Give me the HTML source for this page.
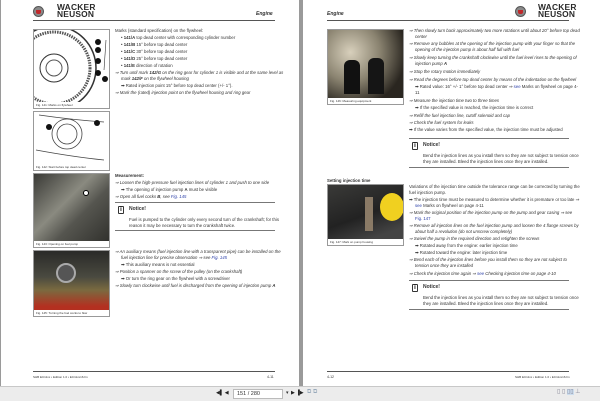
<!DOCTYPE html>
<html><head><meta charset="utf-8"><style>
*{margin:0;padding:0;box-sizing:border-box}
body{width:600px;height:401px;background:#9a9a9a;position:relative;overflow:hidden;font-family:"Liberation Sans",sans-serif}
.pg{position:absolute;top:0;height:386px;background:#fff}
.t{position:absolute;font-size:4.3px;color:#333;white-space:nowrap;line-height:5px}
.i{font-style:italic}
.b{font-weight:bold}
.ln{position:absolute;height:1px;background:#777}
.fig{position:absolute;border:1px solid #999;background:#fff;overflow:hidden}
.cap{position:absolute;bottom:1px;left:2px;font-size:3px;color:#333}
.blue{color:#2a3ea8}
.logo{position:absolute;font-weight:900;font-size:8px;line-height:6.5px;color:#2a2a2a;letter-spacing:.2px;transform:scaleX(1.05);transform-origin:left}
.circ{position:absolute;width:11px;height:11px;border-radius:50%;background:#8a8a8a;border:1px solid #555}
.circ::after{content:"";position:absolute;left:2px;top:2.5px;width:5px;height:4px;background:#c0282a;border-radius:0 0 2px 2px}
.note{position:absolute;width:6px;height:8px;border:1px solid #333;border-radius:1px;font-size:6px;font-weight:bold;text-align:center;line-height:7px}
.dot{position:absolute;width:6px;height:6px;border-radius:50%;background:#111}
</style></head><body>
<div class="pg" style="left:1px;width:298px">
 <div class="circ" style="left:32px;top:6px"></div>
 <div class="logo" style="left:56px;top:5px">WACKER<br>NEUSON</div>
 <div class="t i b" style="left:255px;top:12px;font-size:5px">Engine</div>
 <div class="ln" style="left:32px;top:20px;width:242px;background:#555"></div>

 <div class="fig" style="left:32px;top:29px;width:77px;height:80px">
  <svg width="75" height="72" style="position:absolute;left:0;top:0"><circle cx="20" cy="38" r="42" fill="none" stroke="#333" stroke-width="1.5"/><circle cx="20" cy="38" r="36" fill="none" stroke="#555" stroke-width="3" stroke-dasharray="1.5 1"/><circle cx="20" cy="38" r="14" fill="none" stroke="#333"/><circle cx="20" cy="38" r="8" fill="none" stroke="#555"/><line x1="70" y1="40" x2="72" y2="10" stroke="#333" stroke-width=".6"/></svg>
  <div class="dot" style="left:61px;top:9px"></div><div class="dot" style="left:61px;top:17px"></div><div class="dot" style="left:61px;top:28px"></div><div class="dot" style="left:61px;top:40px"></div><div class="dot" style="left:68px;top:46px"></div>
  <div class="cap">Fig. 141: Marks on flywheel</div></div>
 <div class="fig" style="left:32px;top:111px;width:77px;height:60px">
  <svg width="75" height="50" style="position:absolute;left:0;top:0"><circle cx="33" cy="22" r="15" fill="none" stroke="#444" stroke-width=".8"/><circle cx="33" cy="22" r="10" fill="none" stroke="#444" stroke-width=".8"/><path d="M5 3 Q40 8 70 10 M2 38 Q40 45 70 48" stroke="#444" fill="none" stroke-width=".8"/></svg>
  <div class="dot" style="left:12px;top:12px"></div><div class="dot" style="left:60px;top:8px"></div>
  <div class="cap">Fig. 142: Start before top dead center</div></div>
 <div class="fig" style="left:32px;top:173px;width:77px;height:75px;background:linear-gradient(135deg,#3a3a36,#8a8a80 40%,#55554f 60%,#2e2e2a)">
  <div class="dot" style="left:49px;top:16px;background:#fff;border:1px solid #000"></div>
  <div style="position:absolute;left:0;bottom:0;width:100%;height:6px;background:#fff"></div>
  <div class="cap">Fig. 143: Opening on fuel pump</div></div>
 <div class="fig" style="left:32px;top:250px;width:77px;height:67px;background:linear-gradient(180deg,#2a2a28,#4a4a40 40%,#7a6a40 60%,#b33020 85%)">
  <div style="position:absolute;left:22px;top:12px;width:20px;height:20px;border-radius:50%;background:#555;border:2px solid #aaa"></div>
  <div style="position:absolute;left:0;bottom:0;width:100%;height:6px;background:#fff"></div>
  <div class="cap">Fig. 145: Turning the fuel cocks to flow</div></div>

 <div class="t" style="left:114px;top:28px">Marks (standard specification) on the flywheel:</div>
 <div class="t" style="left:120px;top:35px">• <b>141/A</b> top dead center with corresponding cylinder number</div>
 <div class="t" style="left:120px;top:42px">• <b>141/B</b> 15° before top dead center</div>
 <div class="t" style="left:120px;top:49px">• <b>141/C</b> 30° before top dead center</div>
 <div class="t" style="left:120px;top:56px">• <b>141/D</b> 25° before top dead center</div>
 <div class="t" style="left:120px;top:63px">• <b>141/E</b> direction of rotation</div>
 <div class="t i" style="left:114px;top:70px">⇒ Turn until mark <b>142/G</b> on the ring gear for cylinder 1 is visible and at the same level as</div>
 <div class="t i" style="left:120px;top:76px">mark <b>142/F</b> on the flywheel housing</div>
 <div class="t" style="left:120px;top:83px">➡ Rated injection point 15° before top dead center (+/- 1°).</div>
 <div class="t i" style="left:114px;top:90px">⇒ Mark the (rated) injection point on the flywheel housing and ring gear</div>

 <div class="t b" style="left:114px;top:173px">Measurement:</div>
 <div class="t i" style="left:114px;top:180px">⇒ Loosen the high-pressure fuel injection lines of cylinder 1 and push to one side</div>
 <div class="t" style="left:120px;top:187px">➡ The opening of injection pump <b>A</b> must be visible</div>
 <div class="t i" style="left:114px;top:194px">⇒ Open all fuel cocks <b>B</b>, see <span class="blue">Fig. 145</span></div>
 <div class="ln" style="left:114px;top:202px;width:160px"></div>
 <div class="note" style="left:117px;top:206px">i</div>
 <div class="t b" style="left:128px;top:207px;font-size:5px">Notice!</div>
 <div class="t" style="left:128px;top:217px">Fuel is pumped to the cylinder only every second turn of the crankshaft; for this</div>
 <div class="t" style="left:128px;top:223px">reason it may be necessary to turn the crankshaft twice.</div>
 <div class="ln" style="left:114px;top:230px;width:160px"></div>
 <div class="t i" style="left:114px;top:249px">⇒ An auxiliary means (fuel injection line with a transparent pipe) can be installed on the</div>
 <div class="t i" style="left:120px;top:255px">fuel injection line for precise observation ⇒ see <span class="blue">Fig. 145</span></div>
 <div class="t" style="left:120px;top:262px">➡ This auxiliary means is not essential</div>
 <div class="t i" style="left:114px;top:269px">⇒ Position a spanner on the screw of the pulley (on the crankshaft)</div>
 <div class="t" style="left:120px;top:276px">➡ Or turn the ring gear on the flywheel with a screwdriver</div>
 <div class="t i" style="left:114px;top:283px">⇒ Slowly turn clockwise until fuel is discharged from the opening of injection pump <b>A</b></div>

 <div class="ln" style="left:32px;top:371px;width:242px;background:#555"></div>
 <div class="t" style="left:32px;top:375px;font-size:3px">SHB EC11xx • Edition 1.0 • EC11xx16.fm</div>
 <div class="t" style="left:266px;top:375px;font-size:3.5px">4-11</div>
</div>
<div class="pg" style="left:303px;width:297px">
 <div class="t i b" style="left:24px;top:12px;font-size:5px">Engine</div>
 <div class="circ" style="left:212px;top:6px"></div>
 <div class="logo" style="left:235px;top:5px">WACKER<br>NEUSON</div>
 <div class="ln" style="left:24px;top:20px;width:242px;background:#555"></div>

 <div class="fig" style="left:24px;top:29px;width:77px;height:76px;background:radial-gradient(circle at 30% 30%,#d8d0bc,#8a8370 40%,#2a2620 75%)">
  <div style="position:absolute;left:16px;top:30px;width:16px;height:34px;border-radius:6px 6px 0 0;background:#111"></div>
  <div style="position:absolute;left:40px;top:28px;width:16px;height:36px;border-radius:6px 6px 0 0;background:#151515"></div>
  <div style="position:absolute;left:0;bottom:0;width:100%;height:6px;background:#fff"></div>
  <div class="cap">Fig. 146: Measuring equipment</div></div>

 <div class="t i" style="left:106px;top:28px">⇒ Then slowly turn back approximately two more rotations until about 20° before top dead</div>
 <div class="t i" style="left:112px;top:34px">center</div>
 <div class="t i" style="left:106px;top:41px">⇒ Remove any bubbles at the opening of the injection pump with your finger so that the</div>
 <div class="t i" style="left:112px;top:47px">opening of the injection pump is about half full with fuel</div>
 <div class="t i" style="left:106px;top:55px">⇒ Slowly keep turning the crankshaft clockwise until the fuel level rises to the opening of</div>
 <div class="t i" style="left:112px;top:61px">injection pump <b>A</b></div>
 <div class="t i" style="left:106px;top:69px">⇒ Stop the rotary motion immediately</div>
 <div class="t i" style="left:106px;top:77px">⇒ Read the degrees before top dead center by means of the indentation on the flywheel</div>
 <div class="t" style="left:112px;top:84px">➡ Rated value: 16° +/- 1° before top dead center ⇒ <span class="blue">see</span> Marks on flywheel on page 4-</div>
 <div class="t" style="left:112px;top:90px">11</div>
 <div class="t i" style="left:106px;top:98px">⇒ Measure the injection time two to three times</div>
 <div class="t" style="left:112px;top:105px">➡ If the specified value is reached, the injection time is correct</div>
 <div class="t i" style="left:106px;top:113px">⇒ Refill the fuel injection line, cutoff solenoid and cap</div>
 <div class="t i" style="left:106px;top:120px">⇒ Check the fuel system for leaks</div>
 <div class="t" style="left:106px;top:127px">➡ If the value varies from the specified value, the injection time must be adjusted</div>
 <div class="ln" style="left:106px;top:138px;width:160px"></div>
 <div class="note" style="left:109px;top:142px">i</div>
 <div class="t b" style="left:120px;top:143px;font-size:5px">Notice!</div>
 <div class="t" style="left:120px;top:153px">Bend the injection lines as you install them so they are not subject to tension once</div>
 <div class="t" style="left:120px;top:159px">they are installed. Bleed the injection lines once they are installed.</div>
 <div class="ln" style="left:106px;top:167px;width:160px"></div>

 <div class="t b" style="left:24px;top:178px">Setting injection time</div>
 <div class="fig" style="left:24px;top:184px;width:77px;height:62px;background:linear-gradient(160deg,#3a3a38,#222 50%,#444 80%)">
  <div style="position:absolute;left:52px;top:8px;width:24px;height:28px;border-radius:50%;background:#f0d020"></div>
  <div style="position:absolute;left:37px;top:12px;width:8px;height:34px;background:#8a7a66"></div>
  <div style="position:absolute;left:0;bottom:0;width:100%;height:6px;background:#fff"></div>
  <div class="cap">Fig. 147: Mark on pump housing</div></div>
 <div class="t" style="left:106px;top:184px">Variations of the injection time outside the tolerance range can be corrected by turning the</div>
 <div class="t" style="left:106px;top:190px">fuel injection pump.</div>
 <div class="t" style="left:106px;top:197px">➡ The injection time must be measured to determine whether it is premature or too late ⇒</div>
 <div class="t" style="left:112px;top:203px"><span class="blue">see</span> Marks on flywheel on page 4-11</div>
 <div class="t i" style="left:106px;top:210px">⇒ Mark the original position of the injection pump on the pump and gear casing ⇒ see</div>
 <div class="t blue" style="left:112px;top:216px">Fig. 147</div>
 <div class="t i" style="left:106px;top:223px">⇒ Remove all injection lines on the fuel injection pump and loosen the 4 flange screws by</div>
 <div class="t i" style="left:112px;top:229px">about half a revolution (do not unscrew completely)</div>
 <div class="t i" style="left:106px;top:236px">⇒ Swivel the pump in the required direction and retighten the screws</div>
 <div class="t" style="left:112px;top:243px">➡ Rotated away from the engine: earlier injection time</div>
 <div class="t" style="left:112px;top:250px">➡ Rotated toward the engine: later injection time</div>
 <div class="t i" style="left:106px;top:257px">⇒ Bend each of the injection lines before you install them so they are not subject to</div>
 <div class="t i" style="left:112px;top:263px">tension once they are installed</div>
 <div class="t i" style="left:106px;top:271px">⇒ Check the injection time again ⇒ <span class="blue">see</span> Checking injection time on page 4-10</div>
 <div class="ln" style="left:106px;top:280px;width:160px"></div>
 <div class="note" style="left:109px;top:284px">i</div>
 <div class="t b" style="left:120px;top:285px;font-size:5px">Notice!</div>
 <div class="t" style="left:120px;top:295px">Bend the injection lines as you install them so they are not subject to tension once</div>
 <div class="t" style="left:120px;top:301px">they are installed. Bleed the injection lines once they are installed.</div>
 <div class="ln" style="left:106px;top:309px;width:160px"></div>

 <div class="ln" style="left:24px;top:371px;width:242px;background:#555"></div>
 <div class="t" style="left:24px;top:375px;font-size:3.5px">4-12</div>
 <div class="t" style="left:212px;top:375px;font-size:3px">SHB EC11xx • Edition 1.0 • EC11xx16.fm</div>
</div>
<div style="position:absolute;left:0;top:386px;width:600px;height:15px;background:#ececec;border-top:1px solid #c8c8c8">
 <div class="t" style="left:216px;top:4px;font-size:5px;color:#222">◀▌ ◀</div>
 <div style="position:absolute;left:233px;top:2px;width:50px;height:10px;background:#fff;border:1px solid #bbb;font-size:5.5px;color:#333;padding-left:3px;line-height:8px">151 / 280</div>
 <div class="t" style="left:286px;top:4px;font-size:5px">▾</div>
 <div class="t" style="left:291px;top:4px;font-size:5px;color:#222">▶ ▐▶</div>
 <div class="t" style="left:307px;top:3px;font-size:6px;color:#9ab">⧉ ⧉</div>
 <div class="t" style="left:557px;top:3px;font-size:6px;color:#889">▯ ▯ <span style="background:#cde">▯▯</span> ⊥</div>
</div>
</body></html>
